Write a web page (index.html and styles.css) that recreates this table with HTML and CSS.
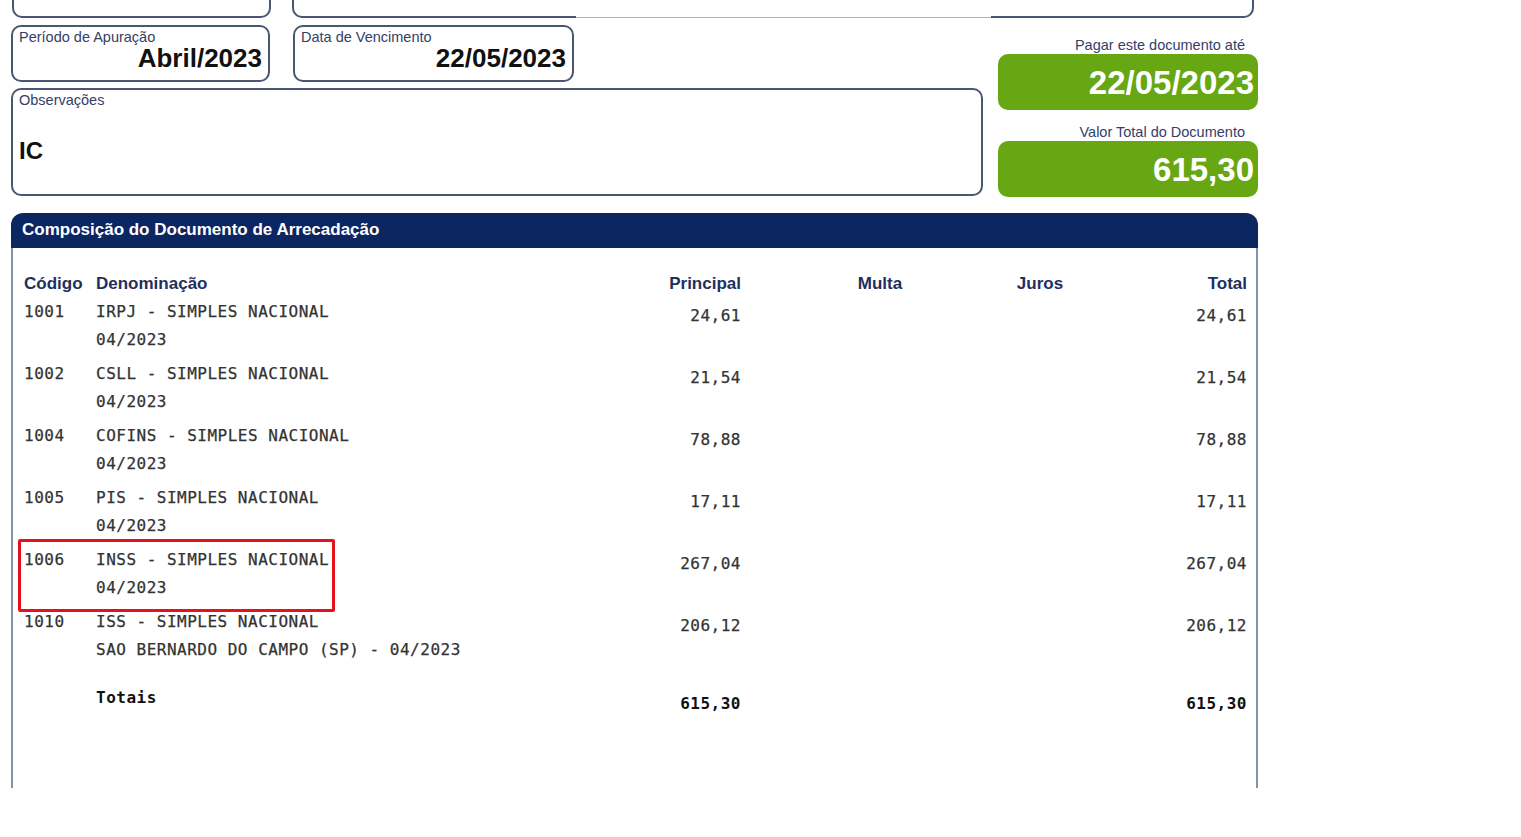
FILE: index.html
```html
<!DOCTYPE html>
<html lang="pt-BR">
<head>
    <meta charset="UTF-8">
    <title>Documento de Arrecadação do Simples Nacional</title>
    <link rel="stylesheet" href="styles.css">
</head>
<body>
    <div class="page">
        <!-- bottom edges of the boxes cut off above -->
        <div class="top-strip">
            <div class="cut cut-left"></div>
            <div class="cut cut-mid"></div>
            <div class="cut-line"></div>
            <div class="cut cut-right"></div>
        </div>

        <div class="main">
            <div class="left-col">
                <div class="field-row">
                    <div class="field field-periodo">
                        <span class="field-label">Período de Apuração</span>
                        <span class="field-value">Abril/2023</span>
                    </div>
                    <div class="field field-venc">
                        <span class="field-label">Data de Vencimento</span>
                        <span class="field-value">22/05/2023</span>
                    </div>
                </div>
                <div class="field field-obs">
                    <span class="field-label">Observações</span>
                    <span class="obs-value">IC</span>
                </div>
            </div>

            <div class="right-col">
                <span class="pay-label">Pagar este documento até</span>
                <div class="pay-box">22/05/2023</div>
                <span class="pay-label">Valor Total do Documento</span>
                <div class="pay-box">615,30</div>
            </div>
        </div>

        <div class="panel">
            <div class="panel-title">Composição do Documento de Arrecadação</div>
            <div class="panel-body">
                <div class="row head">
                    <span class="cod">Código</span>
                    <span class="den">Denominação</span>
                    <span class="pri">Principal</span>
                    <span class="mul">Multa</span>
                    <span class="jur">Juros</span>
                    <span class="tot">Total</span>
                </div>
                <div class="row item">
                    <span class="cod">1001</span>
                    <span class="den">IRPJ - SIMPLES NACIONAL<br>04/2023</span>
                    <span class="pri">24,61</span>
                    <span class="tot">24,61</span>
                </div>
                <div class="row item">
                    <span class="cod">1002</span>
                    <span class="den">CSLL - SIMPLES NACIONAL<br>04/2023</span>
                    <span class="pri">21,54</span>
                    <span class="tot">21,54</span>
                </div>
                <div class="row item">
                    <span class="cod">1004</span>
                    <span class="den">COFINS - SIMPLES NACIONAL<br>04/2023</span>
                    <span class="pri">78,88</span>
                    <span class="tot">78,88</span>
                </div>
                <div class="row item">
                    <span class="cod">1005</span>
                    <span class="den">PIS - SIMPLES NACIONAL<br>04/2023</span>
                    <span class="pri">17,11</span>
                    <span class="tot">17,11</span>
                </div>
                <div class="row item marked">
                    <span class="cod">1006</span>
                    <span class="den">INSS - SIMPLES NACIONAL<br>04/2023</span>
                    <span class="pri">267,04</span>
                    <span class="tot">267,04</span>
                    <span class="mark"></span>
                </div>
                <div class="row item">
                    <span class="cod">1010</span>
                    <span class="den">ISS - SIMPLES NACIONAL<br>SAO BERNARDO DO CAMPO (SP) - 04/2023</span>
                    <span class="pri">206,12</span>
                    <span class="tot">206,12</span>
                </div>
                <div class="row totals">
                    <span class="den">Totais</span>
                    <span class="pri">615,30</span>
                    <span class="tot">615,30</span>
                </div>
            </div>
        </div>
    </div>
</body>
</html>
```

FILE: styles.css
```css
body {
    margin: 0;
    background: #fff;
    font-family: "Liberation Sans", Arial, sans-serif;
}
.page {
    width: 1247px;
    padding-left: 11px;
}

/* cut-off boxes at the top */
.top-strip {
    display: flex;
    height: 18px;
}
.cut {
    height: 16px;
    border: 2px solid #4b5672;
    border-top: none;
}
.cut-left {
    width: 255px;
    margin-left: 1px;
    border-radius: 0 0 10px 10px;
}
.cut-mid {
    width: 282px;
    margin-left: 21px;
    border-right: none;
    border-radius: 0 0 0 10px;
}
.cut-line {
    width: 415px;
    height: 17px;
    border-bottom: 1px solid #9fb2d0;
}
.cut-right {
    width: 261px;
    border-left: none;
    border-radius: 0 0 10px 0;
}

.main {
    display: flex;
    gap: 15px;
}
.left-col {
    width: 972px;
    padding-top: 7px;
}
.field-row {
    display: flex;
    gap: 23px;
}
.field {
    box-sizing: border-box;
    border: 2px solid #4b5672;
    border-radius: 10px;
    display: flex;
    flex-direction: column;
}
.field-periodo {
    width: 259px;
    height: 57px;
}
.field-venc {
    width: 281px;
    height: 57px;
}
.field-label {
    font-size: 14.5px;
    color: #34406a;
    padding: 2px 0 0 6px;
    line-height: 16px;
}
.field-value {
    font-size: 26px;
    font-weight: bold;
    color: #111;
    text-align: right;
    padding-right: 6px;
    line-height: 27px;
}
.field-obs {
    margin-top: 6px;
    width: 972px;
    height: 108px;
}
.obs-value {
    font-size: 24px;
    font-weight: bold;
    color: #111;
    padding: 29px 0 0 6px;
}

.right-col {
    width: 260px;
    display: flex;
    flex-direction: column;
    padding-top: 19px;
}
.pay-label {
    font-size: 14.5px;
    color: #34406a;
    text-align: right;
    padding-right: 13px;
    line-height: 16px;
    height: 17px;
}
.pay-box {
    height: 56px;
    margin-bottom: 14px;
    border-radius: 10px;
    background: #66a713;
    color: #fff;
    font-size: 33px;
    font-weight: bold;
    text-align: right;
    padding-right: 4px;
    line-height: 58px;
}

/* composition panel */
.panel {
    margin-top: 2px;
    width: 1247px;
}
.panel-title {
    height: 35px;
    background: #0c2662;
    border-radius: 12px 12px 0 0;
    color: #fff;
    font-size: 17px;
    font-weight: bold;
    line-height: 34px;
    padding-left: 11px;
}
.panel-body {
    box-sizing: border-box;
    height: 540px;
    border-left: 2px solid #8391b2;
    border-right: 2px solid #8391b2;
    padding: 25px 8px 0 11px;
}
.row {
    position: relative;
    display: grid;
    grid-template-columns: 72px 504px 141px 59px 160px 160px 127px;
}
.cod { grid-column: 1; }
.den { grid-column: 2; }
.pri { grid-column: 3; text-align: right; }
.mul { grid-column: 5; text-align: center; }
.jur { grid-column: 6; text-align: center; }
.tot { grid-column: 7; text-align: right; }

.head {
    font-size: 17px;
    font-weight: bold;
    color: #1f2f5e;
    line-height: 22px;
    height: 25px;
}
.item, .totals {
    font-family: "DejaVu Sans Mono", "Liberation Mono", monospace;
    font-size: 16px;
    letter-spacing: 0.5px;
    color: #333;
    line-height: 28px;
    -webkit-text-stroke: 0.25px #333;
}
.item {
    height: 62px;
}
.item .pri, .item .tot {
    padding-top: 4px;
}
.totals {
    margin-top: 14px;
    font-weight: bold;
    color: #111;
    -webkit-text-stroke: 0;
}
.totals .pri, .totals .tot {
    padding-top: 6px;
}
.mark {
    position: absolute;
    left: -6px;
    top: -7px;
    width: 311px;
    height: 67px;
    border: 3px solid #e3121c;
    border-radius: 2px;
}
```
